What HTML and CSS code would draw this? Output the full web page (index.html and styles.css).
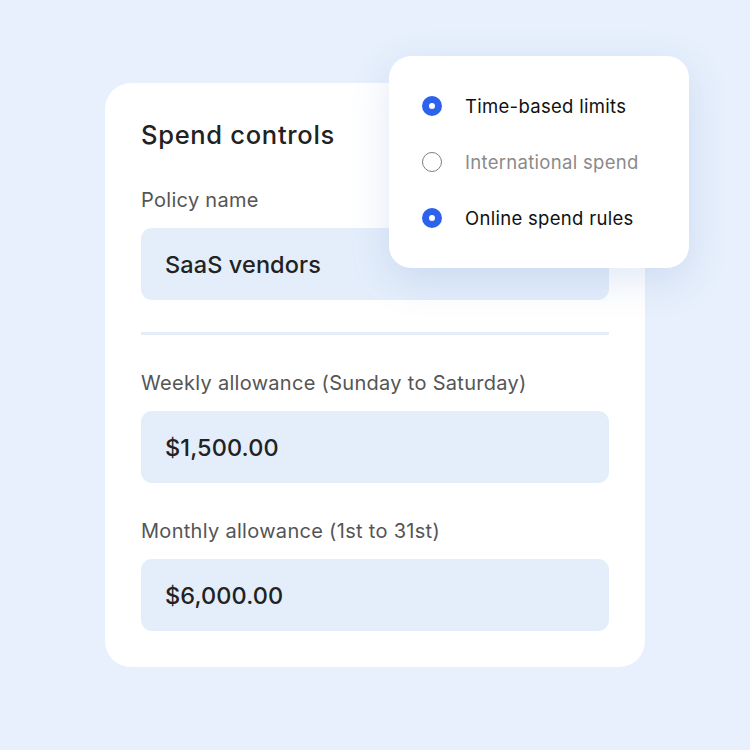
FILE: index.html
```html
<!DOCTYPE html>
<html lang="en">
<head>
    <meta charset="UTF-8">
    <meta name="viewport" content="width=device-width, initial-scale=1.0">
    <title>Spend controls</title>
    <link rel="stylesheet" href="styles.css">
</head>
<body>
    <div class="stage">
        <div class="card">
            <h1>Spend controls</h1>

            <div class="field">
                <label>Policy name</label>
                <div class="value">SaaS vendors</div>
            </div>

            <div class="divider"></div>

            <div class="field">
                <label>Weekly allowance (Sunday to Saturday)</label>
                <div class="value">$1,500.00</div>
            </div>

            <div class="field">
                <label>Monthly allowance (1st to 31st)</label>
                <div class="value">$6,000.00</div>
            </div>

            <div class="popup">
                <div class="option checked">
                    <span class="radio"></span>
                    <span>Time-based limits</span>
                </div>
                <div class="option">
                    <span class="radio"></span>
                    <span>International spend</span>
                </div>
                <div class="option checked">
                    <span class="radio"></span>
                    <span>Online spend rules</span>
                </div>
            </div>
        </div>
    </div>
</body>
</html>
```

FILE: styles.css
```css
* {
    margin: 0;
    padding: 0;
    box-sizing: border-box;
    font-family: 'Inter', 'Liberation Sans', sans-serif;
}

body {
    background: #e7f0fc;
    width: 750px;
    height: 750px;
    overflow: hidden;
}

.stage {
    padding: 83px 0 0 105px;
}

.card {
    position: relative;
    width: 540px;
    background: #ffffff;
    border-radius: 26px;
    padding: 37px 36px 36px;
}

h1 {
    font-size: 25.5px;
    line-height: 30px;
    font-weight: 500;
    color: #222;
    letter-spacing: 0.7px;
    margin-bottom: 38px;
}

.field {
    display: flex;
    flex-direction: column;
    gap: 16px;
}

.field + .field {
    margin-top: 36px;
}

label {
    font-size: 20px;
    line-height: 24px;
    color: #555;
    letter-spacing: 0.3px;
}

.value {
    height: 72px;
    background: #e4eefb;
    border-radius: 11px;
    padding: 0 24px;
    display: flex;
    align-items: center;
    font-size: 23.5px;
    font-weight: 500;
    color: #222;
    letter-spacing: 0.1px;
}

.divider {
    height: 3px;
    background: #e4eefb;
    margin: 32px 0 36px;
}

.popup {
    position: absolute;
    left: 284px;
    top: -27px;
    width: 300px;
    padding: 22px 33px;
    background: #ffffff;
    border-radius: 22px;
    box-shadow: 0 12px 40px rgba(70, 110, 190, 0.16);
}

.option {
    height: 56px;
    display: flex;
    align-items: center;
    gap: 23px;
    font-size: 18.5px;
    color: #8a8a8a;
    letter-spacing: 0.3px;
}

.option.checked {
    color: #111;
}

.radio {
    width: 20px;
    height: 20px;
    border-radius: 50%;
    border: 1.8px solid #808080;
    flex-shrink: 0;
}

.option.checked .radio {
    border: 7px solid #2c62ec;
    background: #ffffff;
}
```
